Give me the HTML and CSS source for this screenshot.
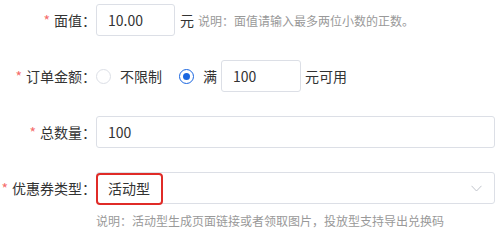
FILE: index.html
```html
<!DOCTYPE html>
<html lang="zh-CN">
<head>
<meta charset="utf-8">
<link rel="stylesheet" href="styles.css">
</head>
<body>
<form class="form">
  <div class="row">
    <label class="label"><span class="req">*</span>面值：</label>
    <div class="control">
      <div class="input w79">10.00</div>
      <span class="unit">元</span>
      <span class="tip">说明：面值请输入最多两位小数的正数。</span>
    </div>
  </div>
  <div class="row">
    <label class="label"><span class="req">*</span>订单金额：</label>
    <div class="control">
      <span class="radio"></span><span class="radio-text">不限制</span>
      <span class="radio checked"></span><span class="radio-text short">满</span>
      <div class="input w80">100</div>
      <span class="unit2">元可用</span>
    </div>
  </div>
  <div class="row">
    <label class="label"><span class="req">*</span>总数量：</label>
    <div class="control">
      <div class="input full">100</div>
    </div>
  </div>
  <div class="row last">
    <label class="label"><span class="req">*</span>优惠券类型：</label>
    <div class="control">
      <div class="select">
        <span class="select-value">活动型</span>
        <svg class="chevron" width="11" height="7" viewBox="0 0 11 7"><path d="M0.5 0.8 L5.5 6 L10.5 0.8" fill="none" stroke="#c0c4cc" stroke-width="1"/></svg>
        <span class="highlight"></span>
      </div>
    </div>
  </div>
  <div class="note">说明：活动型生成页面链接或者领取图片，投放型支持导出兑换码</div>
</form>
</body>
</html>
```
FILE: styles.css
```css
html, body {
  margin: 0;
  padding: 0;
  background: #fff;
}
body {
  font-family: "Microsoft YaHei", "Noto Sans CJK SC", "Noto Sans", sans-serif;
  font-size: 14px;
  color: #333;
}
.form {
  padding-top: 4px;
  width: 495px;
}
.row {
  display: flex;
  align-items: center;
  height: 32px;
  margin-bottom: 24px;
}
.row.last {
  margin-bottom: 0;
}
.label {
  width: 96px;
  flex: none;
  display: flex;
  justify-content: flex-end;
  align-items: center;
  color: #333;
  white-space: nowrap;
  line-height: 32px;
}
.req {
  color: #f56c6c;
  margin-right: 4px;
}
.control {
  flex: 1;
  display: flex;
  align-items: center;
  height: 32px;
  min-width: 0;
}
.input {
  box-sizing: border-box;
  height: 32px;
  border: 1px solid #dcdfe6;
  border-radius: 3px;
  padding-left: 11px;
  line-height: 30px;
  color: #333;
  flex: none;
}
.w79 { width: 79px; }
.w80 { width: 80px; }
.input.full { flex: 1; }
.unit {
  margin-left: 5px;
}
.unit2 {
  margin-left: 4px;
}
.tip {
  margin-left: 4px;
  font-size: 12px;
  color: #999;
  white-space: nowrap;
}
.radio {
  box-sizing: border-box;
  width: 15px;
  height: 15px;
  border: 1px solid #dcdfe6;
  border-radius: 50%;
  flex: none;
  display: flex;
  align-items: center;
  justify-content: center;
}
.radio.checked {
  border: 1.5px solid #1a66e0;
}
.radio.checked::after {
  content: "";
  width: 7px;
  height: 7px;
  border-radius: 50%;
  background: #1a66e0;
}
.radio-text {
  margin-left: 9px;
  margin-right: 17px;
  color: #333;
}
.radio-text.short {
  margin-right: 4px;
}
.select {
  position: relative;
  box-sizing: border-box;
  flex: 1;
  height: 32px;
  border: 1px solid #dcdfe6;
  border-radius: 3px;
  display: flex;
  align-items: center;
  justify-content: space-between;
  padding: 0 12px 0 11px;
}
.select-value {
  color: #333;
  line-height: 30px;
}
.chevron {
  display: block;
}
.highlight {
  position: absolute;
  left: -1px;
  top: 0;
  width: 67px;
  height: 32px;
  box-sizing: border-box;
  border: 2px solid #e02b27;
  border-radius: 4px;
}
.note {
  margin-left: 96px;
  margin-top: 8px;
  font-size: 12px;
  line-height: 18px;
  color: #999;
  white-space: nowrap;
}
```
